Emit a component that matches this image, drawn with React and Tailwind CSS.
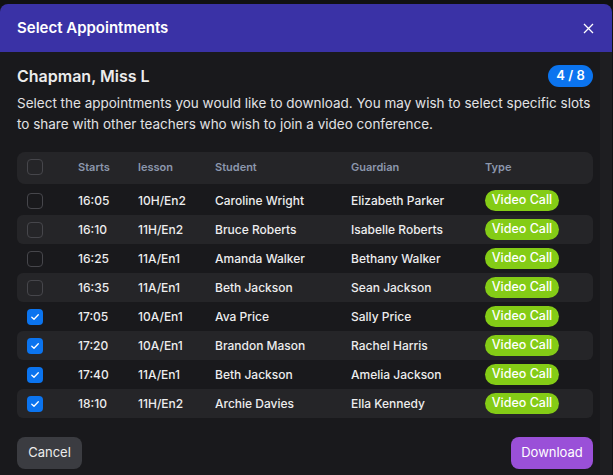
import React from "react";

const rows = [
  { starts: "16:05", lesson: "10H/En2", student: "Caroline Wright", guardian: "Elizabeth Parker", checked: false },
  { starts: "16:10", lesson: "11H/En2", student: "Bruce Roberts", guardian: "Isabelle Roberts", checked: false },
  { starts: "16:25", lesson: "11A/En1", student: "Amanda Walker", guardian: "Bethany Walker", checked: false },
  { starts: "16:35", lesson: "11A/En1", student: "Beth Jackson", guardian: "Sean Jackson", checked: false },
  { starts: "17:05", lesson: "10A/En1", student: "Ava Price", guardian: "Sally Price", checked: true },
  { starts: "17:20", lesson: "10A/En1", student: "Brandon Mason", guardian: "Rachel Harris", checked: true },
  { starts: "17:40", lesson: "11A/En1", student: "Beth Jackson", guardian: "Amelia Jackson", checked: true },
  { starts: "18:10", lesson: "11H/En2", student: "Archie Davies", guardian: "Ella Kennedy", checked: true },
];

const gridCols = "grid grid-cols-[61px_60px_77px_136px_134px_1fr] items-center";

const Checkbox = ({ checked }) =>
  checked ? (
    <span className="flex h-4 w-4 items-center justify-center rounded-[4px] bg-[#0b74ef]">
      <svg width="10" height="10" viewBox="0 0 10 10" fill="none">
        <path d="M1.8 5.2 4 7.3 8.3 2.8" stroke="white" strokeWidth="1.3" strokeLinecap="round" strokeLinejoin="round" />
      </svg>
    </span>
  ) : (
    <span className="block h-4 w-4 rounded-[4px] border border-[#46464b]" />
  );

const App = () => {
  return (
    <div
      className="min-h-screen bg-[#111113] pt-1"
      style={{ fontFamily: "Inter, 'Noto Sans', sans-serif" }}
    >
      <div className="w-[612px] overflow-hidden rounded-t-lg">
        <div className="flex h-12 items-center justify-between bg-[#3a32a6] pl-[17px] pr-[18px]">
          <h2 className="text-[15px] font-semibold text-white">Select Appointments</h2>
          <button className="text-white">
            <svg width="11" height="11" viewBox="0 0 11 11">
              <path d="M1 1 10 10M10 1 1 10" stroke="white" strokeWidth="1.3" />
            </svg>
          </button>
        </div>

        <div className="flex bg-[#19191c]">
          <div className="w-[600px] pl-[17px] pr-[7px] pt-[13px] pb-2">
            <div className="flex h-[22px] items-center justify-between">
              <h3 className="text-[16px] font-semibold text-[#ececec]">Chapman, Miss L</h3>
              <span className="flex h-[22px] w-[45px] items-center justify-center rounded-full bg-[#0b74ef] text-[13px] font-semibold text-white">
                4 / 8
              </span>
            </div>
            <p className="mt-[6px] text-[13.5px] leading-[21px] text-[#e2e2e4]">
              Select the appointments you would like to download. You may wish to select specific slots
              to share with other teachers who wish to join a video conference.
            </p>

            <div className="mt-[17px]">
              <div className={`${gridCols} h-8 rounded-lg bg-[#252528] pb-[2px] text-[11px] font-semibold text-[#8c97ad]`}>
                <span className="pl-[10px]">
                  <Checkbox checked={false} />
                </span>
                <span>Starts</span>
                <span>lesson</span>
                <span>Student</span>
                <span>Guardian</span>
                <span>Type</span>
              </div>
              <div className="mt-[2px]">
                {rows.map((row, index) => (
                  <div
                    key={`${row.starts}-${index}`}
                    className={`${gridCols} h-[29px] rounded-md text-[12px] font-medium text-[#ededee] ${
                      index % 2 === 1 ? "bg-[#252528]" : ""
                    }`}
                  >
                    <span className="pl-[10px]">
                      <Checkbox checked={row.checked} />
                    </span>
                    <span>{row.starts}</span>
                    <span>{row.lesson}</span>
                    <span>{row.student}</span>
                    <span>{row.guardian}</span>
                    <span>
                      <span className="inline-flex h-[21px] w-[74px] items-center justify-center rounded-full bg-[#84cc16] text-[12.5px] font-medium text-white">
                        Video Call
                      </span>
                    </span>
                  </div>
                ))}
              </div>
            </div>

            <div className="mt-[19px] flex justify-between">
              <button className="h-8 w-[65px] rounded-lg bg-[#3b3c41] text-[13px] text-[#ececec]">
                Cancel
              </button>
              <button className="h-8 w-[82px] rounded-lg bg-[#9a50d8] text-[13px] text-white">
                Download
              </button>
            </div>
          </div>
          <div className="w-3 bg-[#1e1e21]" />
        </div>
      </div>
    </div>
  );
};

export default App;
